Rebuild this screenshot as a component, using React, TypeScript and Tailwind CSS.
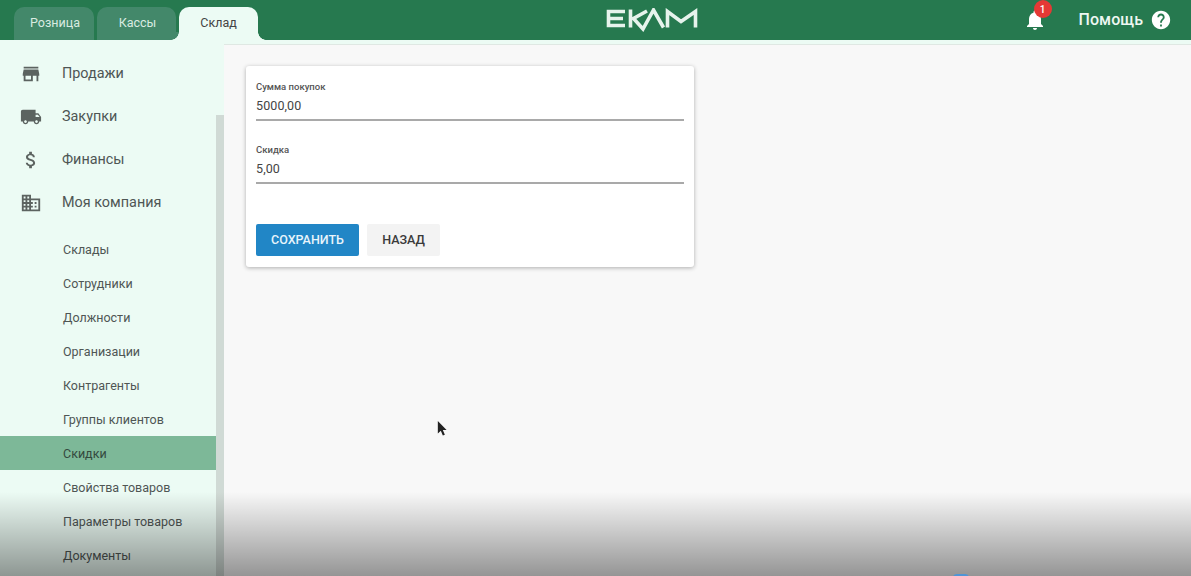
import React from "react";

const paths = {
  store: "M20 4H4v2h16V4zm1 10v-2l-1-5H4l-1 5v2h1v6h10v-6h4v6h2v-6h1zm-9 4H6v-4h6v4z",
  truck: "M20 8h-3V4H3c-1.1 0-2 .9-2 2v11h2c0 1.66 1.34 3 3 3s3-1.34 3-3h6c0 1.66 1.34 3 3 3s3-1.34 3-3h2v-5l-3-4zM6 18.5c-.83 0-1.5-.67-1.5-1.5s.67-1.5 1.5-1.5 1.5.67 1.5 1.5-.67 1.5-1.5 1.5zm13.5-9l1.96 2.5H17V9.5h2.5zm-1.5 9c-.83 0-1.5-.67-1.5-1.5s.67-1.5 1.5-1.5 1.5.67 1.5 1.5-.67 1.5-1.5 1.5z",
  money: "M11.8 10.9c-2.27-.59-3-1.2-3-2.15 0-1.09 1.01-1.85 2.7-1.85 1.78 0 2.44.85 2.5 2.1h2.21c-.07-1.72-1.12-3.3-3.21-3.81V3h-3v2.16c-1.94.42-3.5 1.68-3.5 3.61 0 2.31 1.91 3.46 4.7 4.13 2.5.6 3 1.48 3 2.41 0 .69-.49 1.79-2.7 1.79-2.06 0-2.87-.92-2.98-2.1h-2.2c.12 2.19 1.76 3.42 3.68 3.83V21h3v-2.15c1.95-.37 3.5-1.5 3.5-3.55 0-2.84-2.43-3.81-4.7-4.4z",
  domain: "M12 7V3H2v18h20V7H12zM6 19H4v-2h2v2zm0-4H4v-2h2v2zm0-4H4V9h2v2zm0-4H4V5h2v2zm4 12H8v-2h2v2zm0-4H8v-2h2v2zm0-4H8V9h2v2zm0-4H8V5h2v2zm10 12h-8v-2h2v-2h-2v-2h2v-2h-2V9h8v10zm-2-8h-2v2h2v-2zm0 4h-2v2h2v-2z",
  bell: "M12 22c1.1 0 2-.9 2-2h-4c0 1.1.89 2 2 2zm6-6v-5c0-3.07-1.64-5.64-4.5-6.32V4c0-.83-.67-1.5-1.5-1.5s-1.5.67-1.5 1.5v.68C7.63 5.36 6 7.92 6 11v5l-2 2v1h16v-1l-2-2z",
  help: "M12 2C6.48 2 2 6.48 2 12s4.48 10 10 10 10-4.48 10-10S17.52 2 12 2zm1 17h-2v-2h2v2zm2.07-7.75l-.9.92C13.45 12.9 13 13.5 13 15h-2v-.5c0-1.1.45-2.1 1.17-2.83l1.24-1.26c.37-.36.59-.86.59-1.41 0-1.1-.9-2-2-2s-2 .9-2 2H8c0-2.21 1.79-4 4-4s4 1.79 4 4c0 .88-.36 1.68-.93 2.25z",
};

function Icon({ d, className }: { d: string; className: string }) {
  return (
    <svg viewBox="0 0 24 24" className={className} fill="currentColor">
      <path d={d} />
    </svg>
  );
}

const top = [
  { label: "Продажи", icon: paths.store },
  { label: "Закупки", icon: paths.truck },
  { label: "Финансы", icon: paths.money },
  { label: "Моя компания", icon: paths.domain },
];

const sub = [
  "Склады",
  "Сотрудники",
  "Должности",
  "Организации",
  "Контрагенты",
  "Группы клиентов",
  "Скидки",
  "Свойства товаров",
  "Параметры товаров",
  "Документы",
];

function Field({ label, value }: { label: string; value: string }) {
  return (
    <div className="border-b-2 border-[#a9a9a9] h-[43px] flex flex-col">
      <div className="text-[9.5px] leading-[12px] font-medium text-[#555] mt-[3px]">{label}</div>
      <div className="text-[12.5px] leading-[18px] tracking-[0.1px] text-[#444] mt-[4px]">{value}</div>
    </div>
  );
}

export default function App() {
  return (
    <div className="relative w-[1191px] h-[576px] overflow-hidden bg-[#ecfbf4] font-['Roboto',sans-serif]">
      <header className="h-[40px] bg-[#26794f] flex items-end pl-[14px] relative">
        <div className="flex gap-[3px] items-end">
          <div className="w-[80px] h-[33px] pl-[2px] rounded-t-[10px] bg-[#43886a] text-[#d9ebe1] text-[12.5px] flex items-center justify-center">Розница</div>
          <div className="w-[79px] h-[33px] pl-[2px] rounded-t-[10px] bg-[#43886a] text-[#d9ebe1] text-[12.5px] flex items-center justify-center">Кассы</div>
          <div className="relative w-[79px] h-[33px] rounded-t-[10px] bg-[#ecfbf4] text-[#444] text-[12.5px] flex items-center justify-center">
            Склад
            <span className="absolute -left-[8px] bottom-0 w-[8px] h-[8px] bg-[radial-gradient(circle_at_0_0,#43886a_7.5px,#ecfbf4_8px)]" />
            <span className="absolute -right-[8px] bottom-0 w-[8px] h-[8px] bg-[radial-gradient(circle_at_100%_0,#26794f_7.5px,#ecfbf4_8px)]" />
          </div>
        </div>
        <div className="flex-1 h-[40px] flex items-center justify-center pl-[23px]">
          <svg viewBox="0 0 92 24" className="w-[92px] h-[24px] text-[#e6f3ec]" fill="none" stroke="currentColor" strokeWidth="3.6" aria-label="EKAM">
            <path d="M19 3.5H2.5V17.5H19M2.5 10.5H17" />
            <path d="M24.5 1.5V19.5M41 3L27.5 10.5L37 21L47.5 2L57.5 19.5" />
            <path d="M61.5 19.5V3.5L75 13.5L89.5 3.5V19.5" />
          </svg>
        </div>
        <div className="flex items-center h-[40px] pr-[19px]">
          <div className="relative w-[24px] h-[24px] text-white mr-[32px]">
            <Icon d={paths.bell} className="w-[24px] h-[24px]" />
            <span className="absolute -top-[8px] left-[11px] w-[18px] h-[18px] rounded-full bg-[#e53935] text-white text-[10px] font-medium flex items-center justify-center">1</span>
          </div>
          <span className="text-[#eef7f2] text-[16px] font-medium tracking-[0.05px] mr-[7px]">Помощь</span>
          <Icon d={paths.help} className="w-[22px] h-[22px] text-white" />
        </div>
      </header>

      <div className="flex h-[536px]">
        <aside className="w-[216px] shrink-0 overflow-hidden pt-[12px]">
          {top.map((t) => (
            <div key={t.label} className="h-[43px] flex items-center text-[#4f5654]">
              <div className="w-[62px] flex justify-center">
                <Icon d={t.icon} className="w-[22px] h-[22px] text-[#5c6360]" />
              </div>
              <span className="text-[14.4px]">{t.label}</span>
            </div>
          ))}
          <div className="pt-[8px]">
            {sub.map((s) => (
              <div
                key={s}
                className={
                  "h-[34px] flex items-center pl-[63px] pt-[2px] text-[12.5px] " +
                  (s === "Скидки" ? "bg-[#7db898] text-[#34493e]" : "text-[#4f5654]")
                }
              >
                {s}
              </div>
            ))}
          </div>
        </aside>

        <div className="w-[8px] shrink-0 pt-[75px]">
          <div className="h-full bg-[#d0dad5]" />
        </div>

        <main className="flex-1 mt-[4px] bg-[#f8f8f8] border-t border-[#dfe8e3] pl-[22px] pt-[21px]">
          <div className="w-[448px] h-[201px] bg-white rounded-[3px] shadow-[0_1px_4px_rgba(0,0,0,0.3)] px-[10px] pt-[12px]">
            <Field label="Сумма покупок" value="5000,00" />
            <div className="h-[20px]" />
            <Field label="Скидка" value="5,00" />
            <div className="flex gap-[8px] mt-[40px]">
              <div className="w-[103px] h-[32px] bg-[#2186c6] rounded-[2px] text-[#e8f4fb] text-[12.5px] font-medium flex items-center justify-center">СОХРАНИТЬ</div>
              <div className="w-[73px] h-[32px] bg-[#f3f3f3] rounded-[2px] text-[#3a3a3a] text-[12.5px] font-medium flex items-center justify-center">НАЗАД</div>
            </div>
          </div>
        </main>
      </div>

      <svg viewBox="0 0 12 20" className="absolute left-[437px] top-[420px] w-[10px] h-[17px] text-[#222]" fill="currentColor">
        <path d="M1 1V16L4.6 12.6L7 18.5L9.4 17.5L7 11.8H11.5Z" />
      </svg>
      <div className="absolute left-0 right-0 bottom-0 h-[84px] pointer-events-none bg-gradient-to-b from-[rgba(0,0,0,0)] to-[rgba(0,0,0,0.4)]" />
      <div className="absolute left-[953px] top-[574px] w-[16px] h-[8px] rounded-full bg-[#4f95d6]" />
    </div>
  );
}
